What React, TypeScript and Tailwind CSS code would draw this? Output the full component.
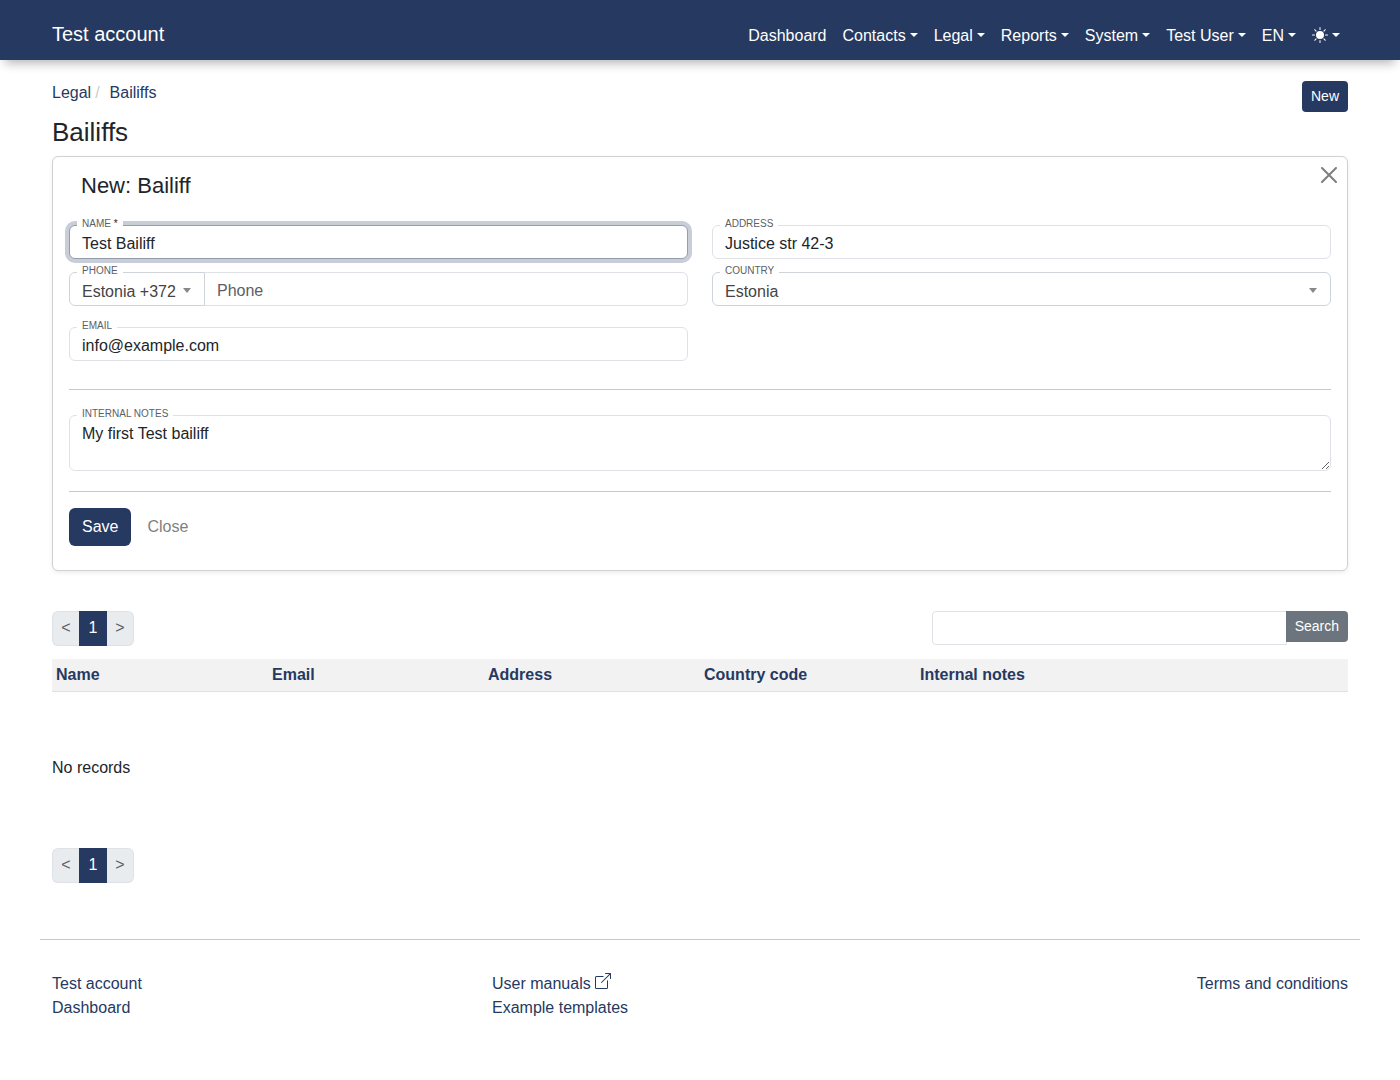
import { useEffect, useRef, type ReactNode } from 'react';
import { BsBoxArrowUpRight, BsSunFill } from 'react-icons/bs';

const menus = ['Contacts', 'Legal', 'Reports', 'System', 'Test User', 'EN'];

const columns = ['Name', 'Email', 'Address', 'Country code', 'Internal notes', ''];

const control = 'block w-full h-[34px] px-3 pt-1 text-base bg-white border rounded-md outline-none';

function Caret() {
  return <span className="mb-0.5 w-2 border-x-4 border-t-4 border-x-transparent border-t-current" />;
}

function Header() {
  return (
    <header className="bg-[#263961] text-white shadow-[0_8px_10px_-5px_rgba(0,0,0,0.3)]">
      <div className="mx-auto flex h-[60px] max-w-[1320px] items-center justify-between px-3 pt-3">
        <a href="#" className="pb-1 text-xl leading-[30px]">
          Test account
        </a>
        <nav className="flex items-center">
          <a href="#" className="px-2">
            Dashboard
          </a>
          {menus.map((menu) => (
            <button key={menu} type="button" className="flex items-center gap-1 px-2">
              {menu}
              <Caret />
            </button>
          ))}
          <button type="button" aria-label="Theme" className="flex items-center gap-1 px-2">
            <BsSunFill className="mb-0.5 size-4" />
            <Caret />
          </button>
        </nav>
      </div>
    </header>
  );
}

interface FieldProps {
  id: string;
  label: string;
  required?: boolean;
  children: ReactNode;
}

function Field({ id, label, required, children }: FieldProps) {
  return (
    <div className="relative">
      {children}
      <label
        htmlFor={id}
        className="absolute -top-2 left-2 bg-white px-[5px] text-[10px] leading-[14px] text-[#5c6066] uppercase"
      >
        {label}
        {required && <span className="text-[#212529]"> *</span>}
      </label>
    </div>
  );
}

interface SelectProps {
  id: string;
  value: string;
  className: string;
  ariaLabel?: string;
}

function Select({ id, value, className, ariaLabel }: SelectProps) {
  return (
    <div className="relative">
      <select
        id={id}
        aria-label={ariaLabel}
        defaultValue={value}
        className={`block h-[34px] w-full appearance-none border border-[#ced4da] bg-white pt-1.5 pl-3 text-base text-[#444] outline-none ${className}`}
      >
        <option>{value}</option>
      </select>
      <span className="pointer-events-none absolute top-4 right-3.5 border-x-4 border-t-5 border-x-transparent border-t-[#888]" />
    </div>
  );
}

function BailiffForm() {
  const nameRef = useRef<HTMLInputElement>(null);

  useEffect(() => {
    const input = nameRef.current;
    if (!input) return;
    input.focus();
    input.setSelectionRange(input.value.length, input.value.length);
  }, []);

  return (
    <form className="relative rounded-md border border-[#d0d1d3] bg-white px-4 pt-3.5 pb-6 shadow-[0_2px_4px_rgba(0,0,0,0.075)]">
      <button type="button" aria-label="Close form" className="absolute top-2.5 right-2.5 text-[#7f7f7f]">
        <svg viewBox="0 0 16 16" className="size-4" stroke="currentColor" strokeWidth={2} strokeLinecap="round">
          <path d="M1 1l14 14M15 1L1 15" />
        </svg>
      </button>
      <h2 className="px-3 text-[22px] leading-[30px]">New: Bailiff</h2>

      <div className="mt-6 grid grid-cols-2 gap-x-6">
        <Field id="name" label="Name" required>
          <input
            ref={nameRef}
            id="name"
            defaultValue="Test Bailiff"
            className={`${control} border-[#939cb0] shadow-[0_0_0_4px_#c9cdd7]`}
          />
        </Field>
        <Field id="address" label="Address">
          <input id="address" defaultValue="Justice str 42-3" className={`${control} border-[#dee2e6]`} />
        </Field>
      </div>

      <div className="mt-[13px] grid grid-cols-2 gap-x-6">
        <Field id="phone" label="Phone">
          <div className="flex">
            <div className="w-[136px]">
              <Select
                id="phone-country"
                value="Estonia +372"
                ariaLabel="Phone country code"
                className="rounded-l-md"
              />
            </div>
            <input
              id="phone"
              type="tel"
              placeholder="Phone"
              className="h-[34px] min-w-0 flex-1 rounded-r-md border border-l-0 border-[#dee2e6] px-3 pt-1 text-base outline-none placeholder:text-[#5c6066]"
            />
          </div>
        </Field>
        <Field id="country" label="Country">
          <Select id="country" value="Estonia" className="rounded-md" />
        </Field>
      </div>

      <div className="mt-[21px] grid grid-cols-2 gap-x-6">
        <Field id="email" label="Email">
          <input
            id="email"
            type="email"
            defaultValue="info@example.com"
            className={`${control} border-[#dee2e6]`}
          />
        </Field>
      </div>

      <hr className="mt-7 mb-[25px] border-[#c7c8c9]" />

      <Field id="notes" label="Internal notes">
        <textarea
          id="notes"
          defaultValue="My first Test bailiff"
          className="block h-14 w-full resize-y rounded-md border border-[#dee2e6] px-3 pt-1.5 text-base outline-none"
        />
      </Field>

      <hr className="mt-5 mb-4 border-[#c7c8c9]" />

      <div className="flex items-center gap-4">
        <button type="submit" className="h-[38px] rounded-md bg-[#263961] px-[13px] text-white">
          Save
        </button>
        <button type="button" className="text-[#7f7f7f]">
          Close
        </button>
      </div>
    </form>
  );
}

function Pagination() {
  return (
    <nav aria-label="Pages" className="flex h-[35px]">
      <button
        type="button"
        className="w-[27px] rounded-l-md border border-r-0 border-[#dee2e6] bg-[#e9ecef] pb-0.5 text-[#595c5f]"
      >
        &lt;
      </button>
      <button type="button" className="w-7 bg-[#263961] pb-0.5 text-white">
        1
      </button>
      <button
        type="button"
        className="w-[27px] rounded-r-md border border-l-0 border-[#dee2e6] bg-[#e9ecef] pb-0.5 text-[#595c5f]"
      >
        &gt;
      </button>
    </nav>
  );
}

function Footer() {
  return (
    <footer className="mx-auto mt-14 max-w-[1320px] border-t border-[#c7c8c9] px-3 pt-8 text-[#263961]">
      <div className="grid grid-cols-3 gap-x-6">
        <div className="flex flex-col items-start">
          <a href="#">Test account</a>
          <a href="#">Dashboard</a>
        </div>
        <div className="flex flex-col items-start">
          <a href="#" className="flex gap-1">
            User manuals
            <BsBoxArrowUpRight className="mt-px size-4" />
          </a>
          <a href="#">Example templates</a>
        </div>
        <div className="text-right">
          <a href="#">Terms and conditions</a>
        </div>
      </div>
    </footer>
  );
}

function App() {
  return (
    <div className="min-h-screen bg-white font-['Liberation_Sans',Arial,sans-serif] text-base text-[#212529]">
      <Header />

      <main className="mx-auto max-w-[1320px] px-3 pt-[21px]">
        <div className="flex items-start justify-between">
          <nav aria-label="Breadcrumb" className="text-[#263961]">
            <a href="#">Legal</a>
            <span className="mr-2.5 ml-1 text-[#ccc]">/</span>
            <a href="#">Bailiffs</a>
          </nav>
          <button type="button" className="h-[31px] rounded bg-[#263961] px-[9px] pb-0.5 text-sm text-white">
            New
          </button>
        </div>
        <h1 className="mt-1 mb-2 text-[26px] leading-8">Bailiffs</h1>

        <BailiffForm />

        <div className="mt-10 flex items-start justify-between">
          <Pagination />
          <form className="flex w-[416px] items-start">
            <input
              type="search"
              aria-label="Search"
              className="h-[34px] min-w-0 flex-1 rounded-l border border-[#dee2e6] px-2 outline-none"
            />
            <button
              type="submit"
              className="-ml-px h-[31px] rounded-r bg-[#6c757d] px-[9px] pb-0.5 text-sm text-white"
            >
              Search
            </button>
          </form>
        </div>

        <table className="mt-[13px] w-full table-fixed text-left text-[#263961]">
          <thead>
            <tr className="border-b border-[#dee2e6] bg-[#f2f2f2]">
              {columns.map((column) => (
                <th key={column} className="p-1 font-bold">
                  {column}
                </th>
              ))}
            </tr>
          </thead>
        </table>

        <p className="pt-16 pb-[68px]">No records</p>

        <Pagination />
      </main>

      <Footer />
    </div>
  );
}

export default App;
